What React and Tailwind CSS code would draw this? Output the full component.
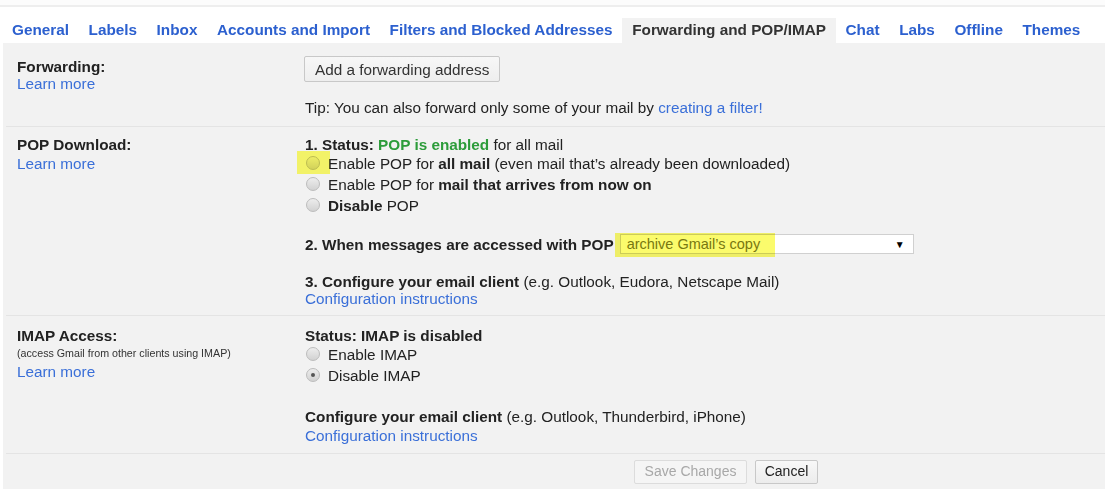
import React from "react";

const font = { fontFamily: '"Liberation Sans", Arial, sans-serif' };

function Radio({ checked }) {
  return (
    <span className="relative ml-[1px] mr-[8px] inline-block h-[14px] w-[14px] shrink-0 rounded-full border border-[#bcbcbc] bg-gradient-to-b from-[#ededed] to-[#d2d2d2]">
      {checked && (
        <span className="absolute left-[4px] top-[4px] h-[4px] w-[4px] rounded-full bg-[#555]" />
      )}
    </span>
  );
}

function Tab({ children, active }) {
  return (
    <div
      className={
        "flex h-[25px] items-center px-[9.8px] text-[15.3px] font-bold " +
        (active ? "bg-[#f2f2f2] text-[#333]" : "text-[#2c60cf]")
      }
    >
      {children}
    </div>
  );
}

export default function App() {
  const tabs = [
    "General",
    "Labels",
    "Inbox",
    "Accounts and Import",
    "Filters and Blocked Addresses",
    "Forwarding and POP/IMAP",
    "Chat",
    "Labs",
    "Offline",
    "Themes",
  ];
  return (
    <div className="h-[489px] w-[1105px] overflow-hidden bg-white text-[#222]" style={font}>
      <div className="h-[5px] bg-[#fcfcfc]" />
      <div className="h-[2px] bg-[#eeeeee]" />
      <div className="flex h-[36px] items-end pl-[2.2px]">
        {tabs.map((t) => (
          <Tab key={t} active={t === "Forwarding and POP/IMAP"}>
            {t}
          </Tab>
        ))}
      </div>
      <div className="ml-[3px] h-[446px] bg-[#f2f2f2] text-[15.3px] leading-[17px]">
        {/* Forwarding */}
        <div className="ml-[3px] flex border-b border-[#e4e4e4] pb-[10px] pl-[11px] pt-[13px]">
          <div className="w-[287px] pt-[2px]">
            <div className="font-bold">Forwarding:</div>
            <div className="text-[#3a6fd8]">Learn more</div>
          </div>
          <div className="flex-1">
            <div className="flex">
              <div className="flex h-[26px] items-center rounded-[2px] border border-[#c8c8c8] bg-gradient-to-b from-[#f7f7f7] to-[#eeeeee] px-[10px] text-[#333]">
                Add a forwarding address
              </div>
            </div>
            <div className="mt-[17px] pl-[1px]">
              Tip: You can also forward only some of your mail by{" "}
              <span className="text-[#3a6fd8]">creating a filter!</span>
            </div>
          </div>
        </div>

        {/* POP */}
        <div className="ml-[3px] flex border-b border-[#e4e4e4] pb-[8.5px] pl-[11px] pt-[8.5px]">
          <div className="w-[287px]">
            <div className="font-bold">POP Download:</div>
            <div className="mt-[2px] text-[#3a6fd8]">Learn more</div>
          </div>
          <div className="flex-1 pl-[1px]">
            <div>
              <span className="font-bold">1. Status: </span>
              <span className="font-bold text-[#2c9c3a]">POP is enabled</span> for all mail
            </div>
            <div className="flex h-[21px] items-center">
              <span className="relative inline-flex">
                <Radio />
                <span className="absolute left-[-8px] top-[-5px] h-[23px] w-[33px] bg-[#ffff6e] mix-blend-multiply" />
              </span>
              <span>
                Enable POP for <b>all mail</b> (even mail that’s already been downloaded)
              </span>
            </div>
            <div className="flex h-[21px] items-center">
              <Radio />
              <span>
                Enable POP for <b>mail that arrives from now on</b>
              </span>
            </div>
            <div className="flex h-[21px] items-center">
              <Radio />
              <span>
                <b>Disable</b> POP
              </span>
            </div>
            <div className="mt-[17.5px] flex h-[22px] items-center">
              <span className="font-bold">2. When messages are accessed with POP</span>
              <div className="relative ml-[6px] flex h-[20px] w-[294px] items-center justify-between border border-[#d0d0d0] bg-white pl-[6px] pr-[8px] text-[14.5px]">
                <span className="absolute left-[-6px] top-[-2px] h-[24px] w-[160px] bg-[#fbfb6c] mix-blend-multiply" />
                <span className="text-[#7a7a2a]">archive Gmail’s copy</span>
                <span className="text-[10px] text-black">▼</span>
              </div>
            </div>
            <div className="mt-[17.5px]">
              <b>3. Configure your email client</b> (e.g. Outlook, Eudora, Netscape Mail)
            </div>
            <div className="text-[#3a6fd8]">Configuration instructions</div>
          </div>
        </div>

        {/* IMAP */}
        <div className="ml-[3px] flex border-b border-[#e4e4e4] pb-[9px] pl-[11px] pt-[10.5px]">
          <div className="w-[287px]">
            <div className="font-bold">IMAP Access:</div>
            <div className="text-[10.7px] leading-[19px] text-[#333]">
              (access Gmail from other clients using IMAP)
            </div>
            <div className="text-[#3a6fd8]">Learn more</div>
          </div>
          <div className="flex-1 pl-[1px]">
            <div className="font-bold">Status: IMAP is disabled</div>
            <div className="flex h-[21px] items-center">
              <Radio />
              <span>Enable IMAP</span>
            </div>
            <div className="flex h-[21px] items-center">
              <Radio checked />
              <span>Disable IMAP</span>
            </div>
            <div className="mt-[22px]">
              <b>Configure your email client</b> (e.g. Outlook, Thunderbird, iPhone)
            </div>
            <div className="mt-[2px] text-[#3a6fd8]">Configuration instructions</div>
          </div>
        </div>

        {/* Buttons */}
        <div className="flex gap-[8px] pl-[631px] pt-[6px] text-[14px]">
          <div className="flex h-[24px] w-[113px] items-center justify-center rounded-[2px] border border-[#dcdcdc] bg-[#f5f5f5] text-[#a8a8a8]">
            Save Changes
          </div>
          <div className="flex h-[24px] w-[63px] items-center justify-center rounded-[2px] border border-[#c8c8c8] bg-gradient-to-b from-[#f8f8f8] to-[#ececec] text-[#222]">
            Cancel
          </div>
        </div>
      </div>
    </div>
  );
}
